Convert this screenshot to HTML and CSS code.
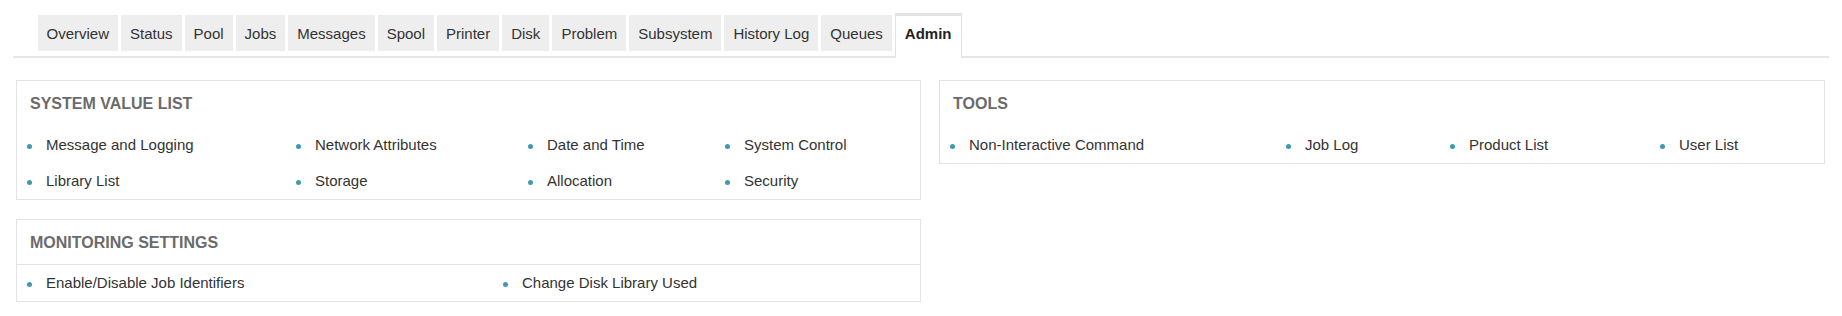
FILE: index.html
```html
<!DOCTYPE html>
<html lang="en">
<head>
<meta charset="utf-8">
<title>Admin</title>
<link rel="stylesheet" href="styles.css">
</head>
<body>
<nav class="tabs">
  <a class="tab">Overview</a>
  <a class="tab">Status</a>
  <a class="tab">Pool</a>
  <a class="tab">Jobs</a>
  <a class="tab">Messages</a>
  <a class="tab">Spool</a>
  <a class="tab">Printer</a>
  <a class="tab">Disk</a>
  <a class="tab">Problem</a>
  <a class="tab">Subsystem</a>
  <a class="tab">History Log</a>
  <a class="tab">Queues</a>
  <a class="tab tab-active">Admin</a>
</nav>
<main class="content">
  <div class="col-left">
    <section class="panel">
      <h2 class="panel-title">SYSTEM VALUE LIST</h2>
      <ul class="links links-sysval">
        <li>Message and Logging</li>
        <li>Network Attributes</li>
        <li>Date and Time</li>
        <li>System Control</li>
        <li>Library List</li>
        <li>Storage</li>
        <li>Allocation</li>
        <li>Security</li>
      </ul>
    </section>
    <section class="panel">
      <h2 class="panel-title panel-title-sep">MONITORING SETTINGS</h2>
      <ul class="links links-monitor">
        <li>Enable/Disable Job Identifiers</li>
        <li>Change Disk Library Used</li>
      </ul>
    </section>
  </div>
  <div class="col-right">
    <section class="panel">
      <h2 class="panel-title">TOOLS</h2>
      <ul class="links links-tools">
        <li>Non-Interactive Command</li>
        <li>Job Log</li>
        <li>Product List</li>
        <li>User List</li>
      </ul>
    </section>
  </div>
</main>
</body>
</html>
```
FILE: styles.css
```css
body {
  margin: 0;
  background: #fff;
  color: #333;
  font-family: "Liberation Sans", Arial, sans-serif;
}

.tabs {
  display: flex;
  align-items: flex-start;
  gap: 3px;
  margin: 0 13px;
  padding: 13px 0 0 24.5px;
  border-bottom: 2px solid #e6e6e6;
}

.tab {
  box-sizing: border-box;
  margin-top: 2px;
  padding: 2px 9px 0;
  height: 36px;
  line-height: 34px;
  background: #eeeeee;
  font-size: 15px;
  color: #333;
  white-space: nowrap;
}

.tab-active {
  margin-top: 0;
  margin-bottom: -2px;
  height: auto;
  line-height: 34px;
  padding: 1px 9px 7px;
  background: #fff;
  border: 1px solid #e3e3e3;
  border-top: 3px solid #e3e3e3;
  border-bottom: 0;
  font-weight: bold;
  color: #222;
}

.content {
  display: flex;
  align-items: flex-start;
  gap: 18px;
  padding: 22px 17px 0 16px;
}

.col-left {
  width: 905px;
  display: flex;
  flex-direction: column;
  gap: 19px;
}

.col-right {
  flex: 1;
}

.panel {
  border: 1px solid #e3e3e3;
  background: #fff;
}

.panel-title {
  margin: 0;
  padding: 13px 13px 12px;
  font-size: 16px;
  line-height: 20px;
  font-weight: bold;
  color: #6b6b6b;
  border-bottom: 1px solid transparent;
}

.panel-title-sep {
  padding-bottom: 11px;
  border-bottom-color: #e3e3e3;
}

.links {
  list-style: none;
  margin: 0;
  padding: 0 0 0 10px;
  display: grid;
  font-size: 15px;
  line-height: 20px;
  color: #333;
}

.links li {
  padding: 8px 0;
  white-space: nowrap;
}

.links li::before {
  content: "";
  display: inline-block;
  width: 5px;
  height: 5px;
  border-radius: 50%;
  background: #4298ad;
  vertical-align: middle;
  margin-right: 14px;
}

.links-sysval {
  grid-template-columns: 269px 232px 197px 1fr;
}

.links-monitor {
  grid-template-columns: 476px 1fr;
}

.links-tools {
  grid-template-columns: 336px 164px 210px 1fr;
}
```
